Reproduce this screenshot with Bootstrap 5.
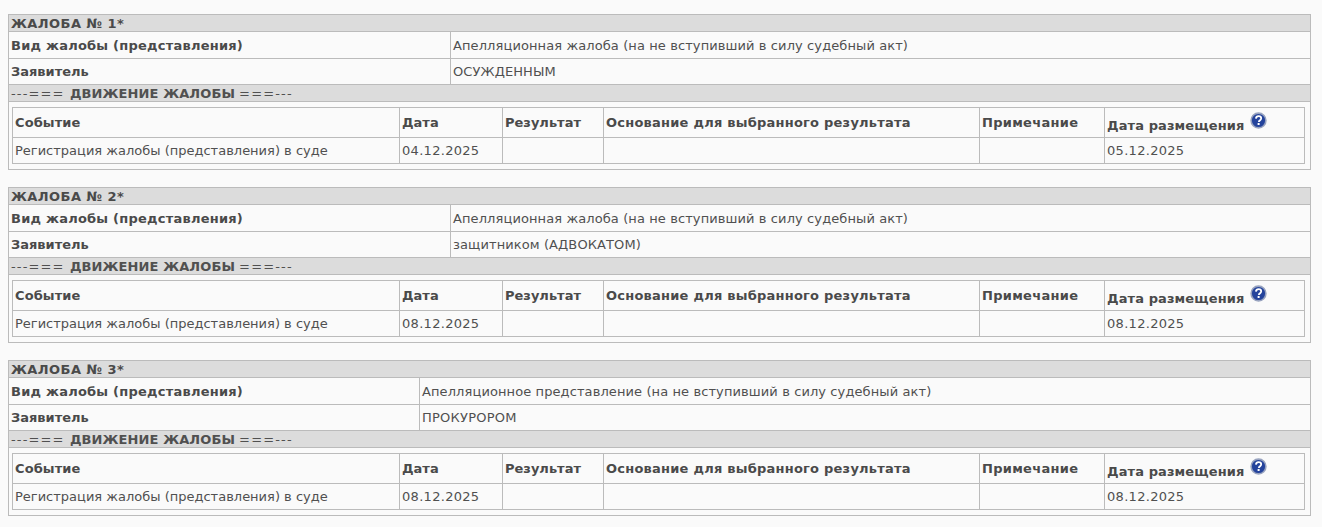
<!DOCTYPE html>
<html lang="ru"><head><meta charset="utf-8"><title>Жалобы</title>
<link rel="stylesheet" href="https://cdn.jsdelivr.net/npm/bootstrap@5.3.0/dist/css/bootstrap.min.css">
<style>
body{background:#fafafa;color:#505050;font:13px/16px "DejaVu Sans",Verdana,sans-serif;padding:14px 11px 0 8px}
.case-tbl{--bs-table-bg:transparent;--bs-table-color:#505050;--bs-table-border-color:#bbb;table-layout:fixed;width:1303px;margin:0 0 17px;font-size:13px;line-height:16px;color:#505050;border-color:#bbb}
.case-tbl>tbody>tr>*{padding:0 2px;border:1px solid #bbb;vertical-align:middle;font-weight:400;background:transparent;color:#505050}
.case-tbl>tbody>tr>th{font-weight:700;color:#4a4a4a}
.case-tbl>tbody>tr>.band{background:#dcdcdc;height:17px;line-height:15px;padding:0 2px}
.case-tbl>tbody>tr.info-row>*{height:27px;padding-top:1px}
.case-tbl>tbody>tr.info-row2>*{height:26px}
.case-tbl>tbody>tr>.holder{padding:5px 6px 5px 3px}
.sub-tbl{--bs-table-bg:transparent;table-layout:fixed;width:1293px;margin:0;border-color:#bbb}
.sub-tbl>tbody>tr>*{padding:0 2px;border:1px solid #bbb;font-size:13px;line-height:16px;color:#505050;vertical-align:middle;background:transparent;font-weight:400}
.sub-tbl>tbody>tr>th{font-weight:700;height:30px;color:#4a4a4a}
.sub-tbl>tbody>tr>td{height:26px}
.q-ico{width:17px;height:17px;vertical-align:1px;margin-left:1px}
.track-a{letter-spacing:.1px}
.track-b{letter-spacing:.23px}
.track-c{letter-spacing:.3px}
.track-d{letter-spacing:.45px}
.dash-run{letter-spacing:1.15px}
</style></head><body>

<table class="table case-tbl"><colgroup><col width="442"><col></colgroup><tbody>
<tr><th colspan="2" class="band track-d">ЖАЛОБА № 1*</th></tr>
<tr class="info-row"><th class="track-b">Вид жалобы (представления)</th><td class="track-a">Апелляционная жалоба (на не вступивший в силу судебный акт)</td></tr>
<tr class="info-row2"><th>Заявитель</th><td class="track-a">ОСУЖДЕННЫМ</td></tr>
<tr><td colspan="2" class="band"><span class="dash-run">---=== </span><b class="track-a">ДВИЖЕНИЕ ЖАЛОБЫ</b> <span class="dash-run">===---</span></td></tr>
<tr><td colspan="2" class="holder">
<table class="table sub-tbl"><colgroup><col width="387"><col width="103"><col width="101"><col width="376"><col width="125"><col></colgroup><tbody>
<tr><th class="track-a">Событие</th><th>Дата</th><th>Результат</th><th class="track-b">Основание для выбранного результата</th><th class="track-c">Примечание</th><th><span class="track-a">Дата размещения</span> <svg class="q-ico" viewBox="0 0 17 17"><circle cx="8.5" cy="8.5" r="7.4" fill="#24439c" stroke="#98a3bf" stroke-width="1.6"/><path d="M5.9 6.6c.2-1.6 1.3-2.4 2.7-2.4 1.6 0 2.6.9 2.6 2.1 0 1-.6 1.6-1.3 2.1-.7.4-1 .8-1 1.5" fill="none" stroke="#fff" stroke-width="1.8"/><rect x="7.6" y="11" width="2" height="2" fill="#fff"/></svg></th></tr>
<tr><td>Регистрация жалобы (представления) в суде</td><td class="track-c">04.12.2025</td><td></td><td></td><td></td><td class="track-c">05.12.2025</td></tr>
</tbody></table></td></tr>
</tbody></table>

<table class="table case-tbl"><colgroup><col width="442"><col></colgroup><tbody>
<tr><th colspan="2" class="band track-d">ЖАЛОБА № 2*</th></tr>
<tr class="info-row"><th class="track-b">Вид жалобы (представления)</th><td class="track-a">Апелляционная жалоба (на не вступивший в силу судебный акт)</td></tr>
<tr class="info-row2"><th>Заявитель</th><td class="track-a">защитником (АДВОКАТОМ)</td></tr>
<tr><td colspan="2" class="band"><span class="dash-run">---=== </span><b class="track-a">ДВИЖЕНИЕ ЖАЛОБЫ</b> <span class="dash-run">===---</span></td></tr>
<tr><td colspan="2" class="holder">
<table class="table sub-tbl"><colgroup><col width="387"><col width="103"><col width="101"><col width="376"><col width="125"><col></colgroup><tbody>
<tr><th class="track-a">Событие</th><th>Дата</th><th>Результат</th><th class="track-b">Основание для выбранного результата</th><th class="track-c">Примечание</th><th><span class="track-a">Дата размещения</span> <svg class="q-ico" viewBox="0 0 17 17"><circle cx="8.5" cy="8.5" r="7.4" fill="#24439c" stroke="#98a3bf" stroke-width="1.6"/><path d="M5.9 6.6c.2-1.6 1.3-2.4 2.7-2.4 1.6 0 2.6.9 2.6 2.1 0 1-.6 1.6-1.3 2.1-.7.4-1 .8-1 1.5" fill="none" stroke="#fff" stroke-width="1.8"/><rect x="7.6" y="11" width="2" height="2" fill="#fff"/></svg></th></tr>
<tr><td>Регистрация жалобы (представления) в суде</td><td class="track-c">08.12.2025</td><td></td><td></td><td></td><td class="track-c">08.12.2025</td></tr>
</tbody></table></td></tr>
</tbody></table>

<table class="table case-tbl"><colgroup><col width="411"><col></colgroup><tbody>
<tr><th colspan="2" class="band track-d">ЖАЛОБА № 3*</th></tr>
<tr class="info-row"><th class="track-b">Вид жалобы (представления)</th><td class="track-a">Апелляционное представление (на не вступивший в силу судебный акт)</td></tr>
<tr class="info-row2"><th>Заявитель</th><td class="track-b">ПРОКУРОРОМ</td></tr>
<tr><td colspan="2" class="band"><span class="dash-run">---=== </span><b class="track-a">ДВИЖЕНИЕ ЖАЛОБЫ</b> <span class="dash-run">===---</span></td></tr>
<tr><td colspan="2" class="holder">
<table class="table sub-tbl"><colgroup><col width="387"><col width="103"><col width="101"><col width="376"><col width="125"><col></colgroup><tbody>
<tr><th class="track-a">Событие</th><th>Дата</th><th>Результат</th><th class="track-b">Основание для выбранного результата</th><th class="track-c">Примечание</th><th><span class="track-a">Дата размещения</span> <svg class="q-ico" viewBox="0 0 17 17"><circle cx="8.5" cy="8.5" r="7.4" fill="#24439c" stroke="#98a3bf" stroke-width="1.6"/><path d="M5.9 6.6c.2-1.6 1.3-2.4 2.7-2.4 1.6 0 2.6.9 2.6 2.1 0 1-.6 1.6-1.3 2.1-.7.4-1 .8-1 1.5" fill="none" stroke="#fff" stroke-width="1.8"/><rect x="7.6" y="11" width="2" height="2" fill="#fff"/></svg></th></tr>
<tr><td>Регистрация жалобы (представления) в суде</td><td class="track-c">08.12.2025</td><td></td><td></td><td></td><td class="track-c">08.12.2025</td></tr>
</tbody></table></td></tr>
</tbody></table>
</body></html>
